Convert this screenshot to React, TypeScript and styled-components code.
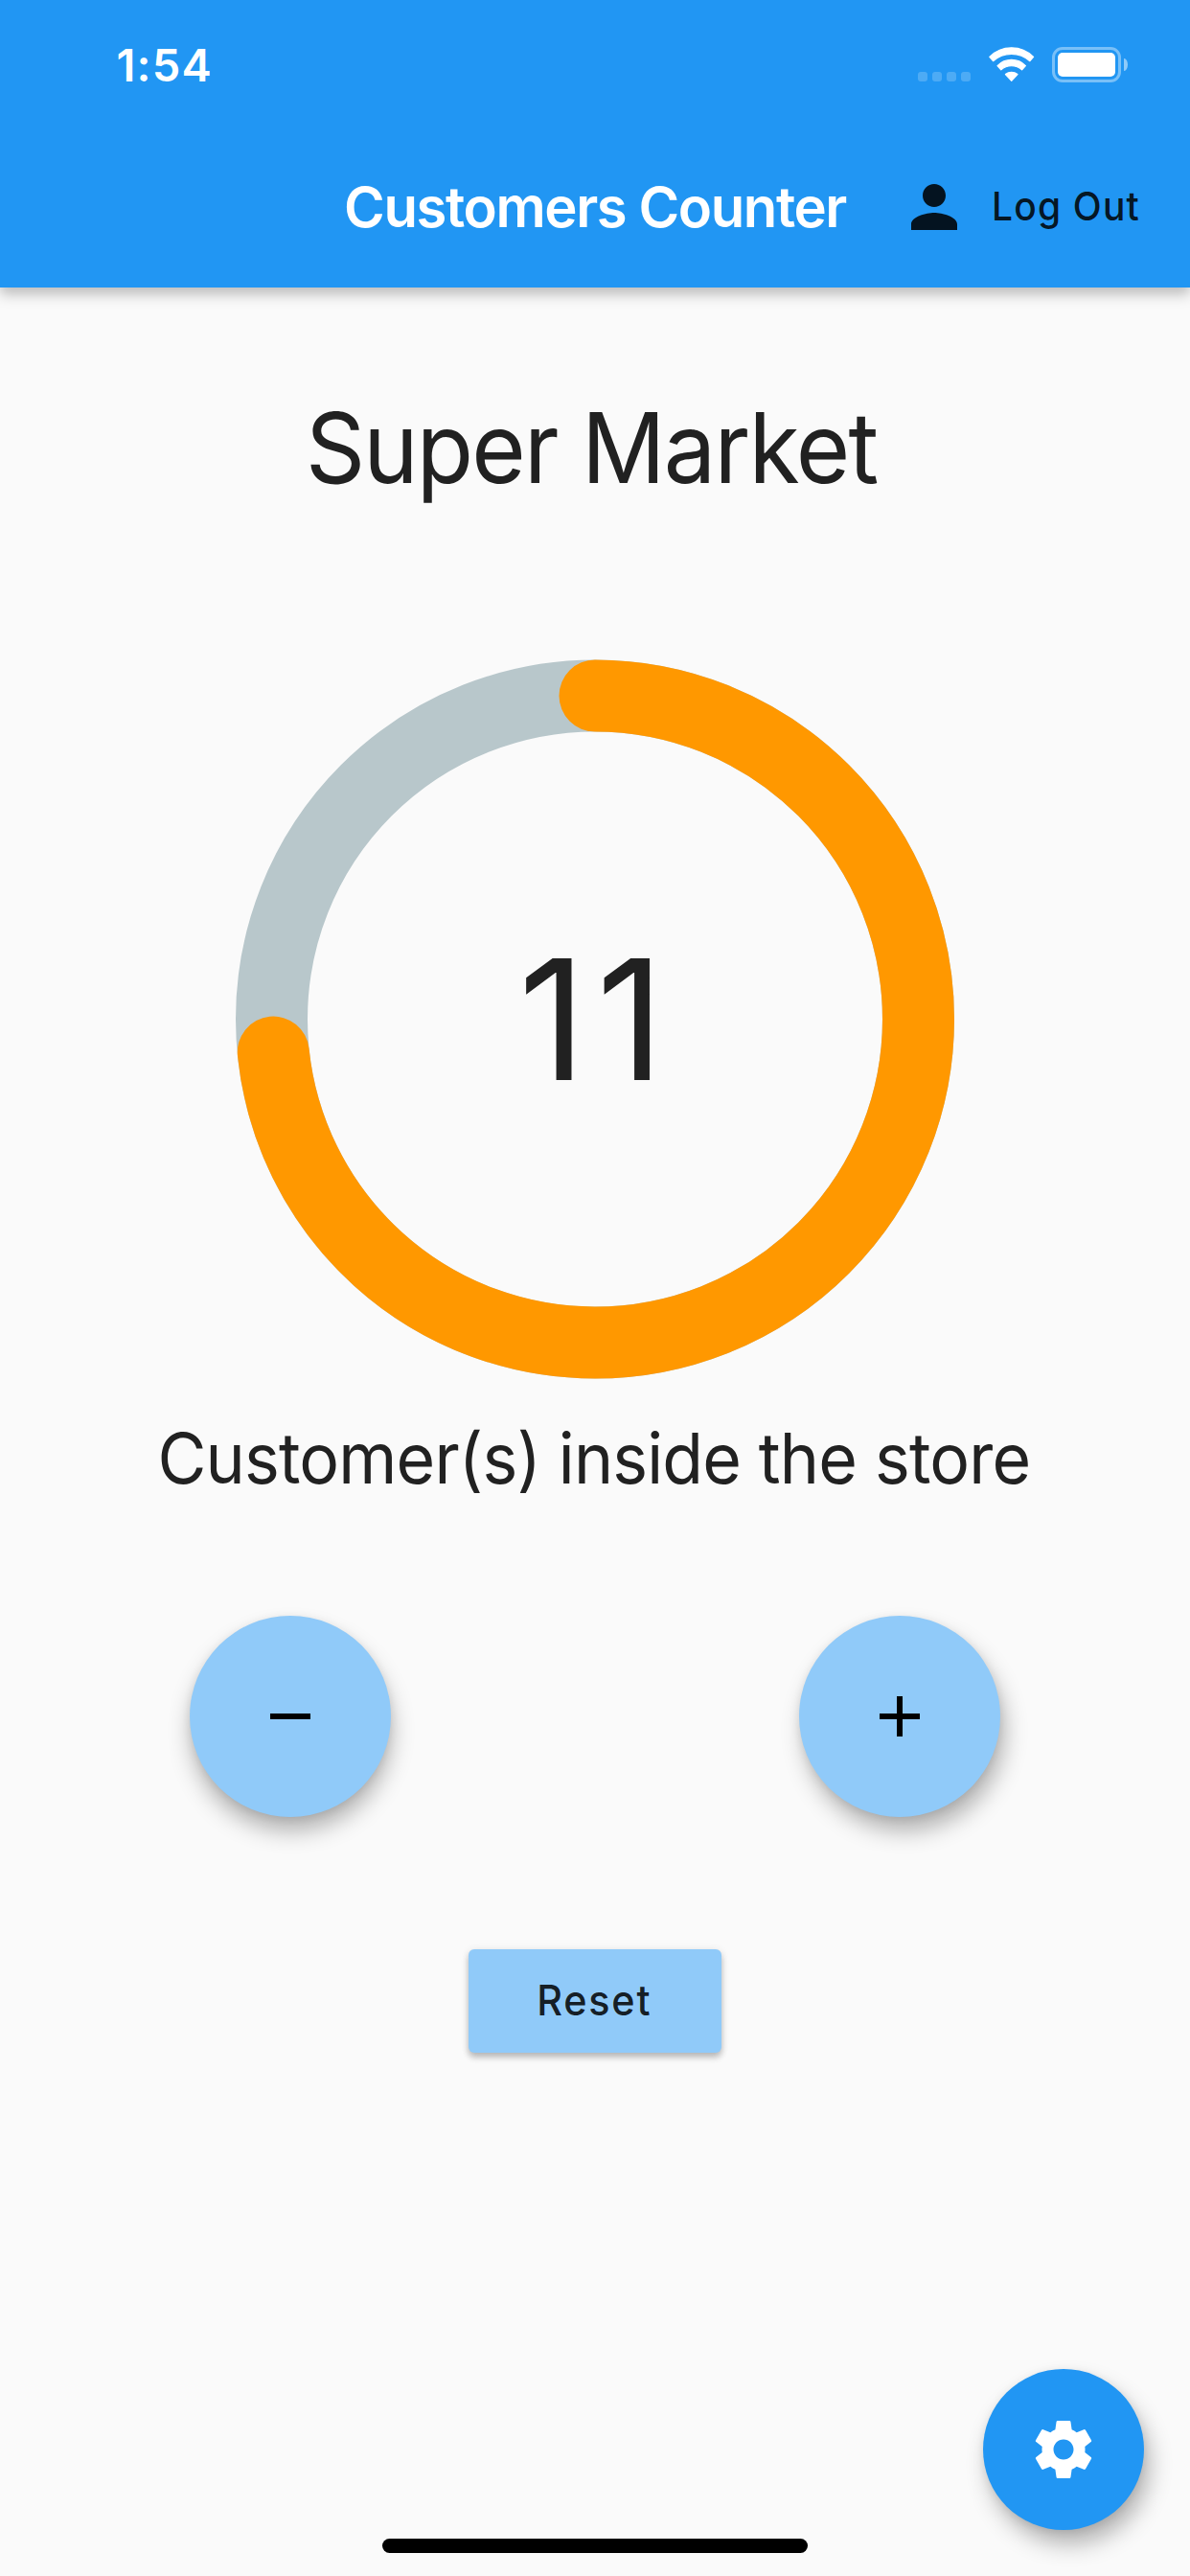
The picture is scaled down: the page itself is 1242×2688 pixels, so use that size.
import React, { useState } from "react";
import styled, { createGlobalStyle } from "styled-components";

const BLUE = "#2196f3";
const LIGHT_BLUE = "#90caf9";
const INK = "rgba(0, 0, 0, 0.87)";
const CAPACITY = 15;

const GlobalStyle = createGlobalStyle`
  * {
    box-sizing: border-box;
  }
  body {
    margin: 0;
    background: #fafafa;
  }
`;

const Screen = styled.div`
  position: relative;
  display: flex;
  flex-direction: column;
  width: 1242px;
  height: 2688px;
  overflow: hidden;
  background: #fafafa;
  color: #212121;
  font-family: Inter, "Liberation Sans", sans-serif;
`;

const Header = styled.header`
  flex: none;
  height: 300px;
  background: ${BLUE};
  box-shadow: 0 7px 13px rgba(0, 0, 0, 0.25);
`;

const StatusBar = styled.div`
  display: flex;
  justify-content: space-between;
  height: 132px;
  padding: 39px 65px 0 121.5px;
  color: #fff;
`;

const Clock = styled.span`
  font-size: 47px;
  font-weight: 600;
  line-height: 57px;
  letter-spacing: 1.2px;
`;

const StatusIcons = styled.div`
  display: flex;
  align-items: flex-start;
  padding-top: 10px;
`;

const SignalDots = styled.div`
  display: flex;
  gap: 5px;
  padding-top: 26px;
  margin-right: 18px;
`;

const SignalDot = styled.i`
  width: 10px;
  height: 10px;
  border-radius: 3px;
  background: rgba(255, 255, 255, 0.2);
`;

const WifiGlyph = styled.svg`
  display: block;
  width: 50px;
  height: 38px;
  margin: -1px 17px 0 0;
`;

const Battery = styled.div`
  display: flex;
  align-items: center;
  gap: 3px;
`;

const BatteryCase = styled.div`
  width: 72px;
  height: 37px;
  padding: 3px;
  border: 3px solid rgba(255, 255, 255, 0.4);
  border-radius: 11px;
`;

const BatteryCharge = styled.div`
  height: 25px;
  border-radius: 5px;
  background: #fff;
`;

const BatteryTip = styled.div`
  width: 4px;
  height: 13px;
  border-radius: 0 4px 4px 0 / 0 7px 7px 0;
  background: rgba(255, 255, 255, 0.5);
`;

const AppBar = styled.div`
  display: grid;
  grid-template-columns: 1fr auto 1fr;
  align-items: center;
  height: 168px;
`;

const Title = styled.h1`
  grid-column: 2;
  margin: 0;
  color: #fff;
  font-size: 58px;
  font-weight: 600;
  line-height: 70px;
  letter-spacing: -1.4px;
  white-space: nowrap;
`;

const LogOut = styled.button`
  display: flex;
  align-items: center;
  justify-content: flex-end;
  gap: 24px;
  padding: 0 44px 0 0;
  border: 0;
  background: none;
  color: ${INK};
  font: 500 41px/50px Inter, "Liberation Sans", sans-serif;
  letter-spacing: 1.26px;
  white-space: nowrap;
`;

const LogOutLabel = styled.span`
  padding-bottom: 2px;
  transform: scaleX(0.95);
  transform-origin: left;
`;

const Glyph = styled.svg`
  display: block;
  flex: none;
  width: 72px;
  height: 72px;
  fill: currentColor;
`;

const Main = styled.main`
  display: flex;
  flex-direction: column;
  align-items: center;
  padding-top: 105px;
`;

const StoreName = styled.h2`
  margin: 0;
  padding-right: 8px;
  font-size: 102px;
  font-weight: 400;
  line-height: 124px;
  letter-spacing: -1.9px;
  white-space: nowrap;
  transform: scaleX(0.95);
`;

const Gauge = styled.div`
  display: grid;
  place-items: center;
  margin-top: 159px;

  & > * {
    grid-area: 1 / 1;
  }
`;

const GaugeRing = styled.svg`
  display: block;
  width: 752px;
  height: 751px;
`;

const Count = styled.output`
  padding-left: 3px;
  font-size: 174px;
  line-height: 211px;
  letter-spacing: 10.7px;
`;

const Caption = styled.p`
  margin: 38px 0 0;
  padding-right: 2px;
  font-size: 73px;
  line-height: 89px;
  letter-spacing: -0.85px;
  white-space: nowrap;
  transform: scaleX(0.955);
`;

const Stepper = styled.div`
  display: flex;
  justify-content: space-between;
  align-self: stretch;
  margin-top: 120px;
  padding: 0 198px;
`;

const RoundButton = styled.button<{ $size: number; $fill: string; $ink: string; $shift: number }>`
  display: grid;
  place-items: center;
  width: ${(p) => p.$size}px;
  height: ${(p) => p.$size}px;
  padding: 0;
  border: 0;
  border-radius: 50%;
  background: ${(p) => p.$fill};
  color: ${(p) => p.$ink};
  box-shadow:
    ${(p) => p.$shift}px 15px 24px -1px rgba(0, 0, 0, 0.3),
    0 2px 10px rgba(0, 0, 0, 0.08);
`;

const ResetButton = styled.button`
  display: grid;
  place-items: center;
  width: 264px;
  height: 108px;
  margin-top: 138px;
  padding: 0 2px 2px 0;
  border: 0;
  border-radius: 6px;
  background: ${LIGHT_BLUE};
  box-shadow:
    0 5px 6px rgba(0, 0, 0, 0.22),
    0 1px 8px rgba(0, 0, 0, 0.1);
  color: ${INK};
  font: 500 43.5px/53px Inter, "Liberation Sans", sans-serif;
  letter-spacing: 1.9px;
`;

const ResetLabel = styled.span`
  transform: scaleX(0.95);
`;

const FloatingAction = styled.div`
  position: absolute;
  right: 48px;
  bottom: 48px;
`;

const HomeIndicator = styled.div`
  position: absolute;
  bottom: 24px;
  left: 399px;
  width: 444px;
  height: 15px;
  border-radius: 8px;
  background: #000;
`;

const ICONS = {
  person:
    "M12 12c2.21 0 4-1.79 4-4s-1.79-4-4-4-4 1.79-4 4 1.79 4 4 4zm0 2c-2.67 0-8 1.34-8 4v2h16v-2c0-2.66-5.33-4-8-4z",
  minus: "M19 13H5v-2h14v2z",
  plus: "M19 13h-6v6h-2v-6H5v-2h6V5h2v6h6v2z",
  settings:
    "M19.43 12.98c.04-.32.07-.64.07-.98s-.03-.66-.07-.98l2.11-1.65c.19-.15.24-.42.12-.64l-2-3.46c-.12-.22-.39-.3-.61-.22l-2.49 1c-.52-.4-1.08-.73-1.69-.98l-.38-2.65C14.46 2.18 14.25 2 14 2h-4c-.25 0-.46.18-.49.42l-.38 2.65c-.61.25-1.17.59-1.69.98l-2.49-1c-.23-.09-.49 0-.61.22l-2 3.46c-.13.22-.07.49.12.64l2.11 1.65c-.04.32-.07.65-.07.98s.03.66.07.98l-2.11 1.65c-.19.15-.24.42-.12.64l2 3.46c.12.22.39.3.61.22l2.49-1c.52.4 1.08.73 1.69.98l.38 2.65c.03.24.24.42.49.42h4c.25 0 .46-.18.49-.42l.38-2.65c.61-.25 1.17-.59 1.69-.98l2.49 1c.23.09.49 0 .61-.22l2-3.46c.12-.22.07-.49-.12-.64l-2.11-1.65zM12 15.5c-1.93 0-3.5-1.57-3.5-3.5s1.57-3.5 3.5-3.5 3.5 1.57 3.5 3.5-1.57 3.5-3.5 3.5z",
};

function Icon({ name }: { name: keyof typeof ICONS }) {
  return (
    <Glyph viewBox="0 0 24 24" aria-hidden="true">
      <path d={ICONS[name]} />
    </Glyph>
  );
}

function WifiIcon() {
  return (
    <WifiGlyph viewBox="-1 -1 50 38" fill="#fff" stroke="#fff" strokeWidth="1.2" strokeLinejoin="round" aria-hidden="true">
      <path d="M.8 10.4A32.2 32.2 0 0 1 46.6 10.4L42.9 14.7A28.6 28.6 0 0 0 4.5 14.7Z" />
      <path d="M9 19.7A20.4 20.4 0 0 1 38.4 19.7L34.6 23.9A16.4 16.4 0 0 0 12.8 23.9Z" />
      <path d="M17.4 28.6A10.4 10.4 0 0 1 30 28.6L23.7 35.3Z" />
    </WifiGlyph>
  );
}

function OccupancyRing({ ratio }: { ratio: number }) {
  const radius = 337.5;
  const length = 2 * Math.PI * radius;
  return (
    <GaugeRing viewBox="0 0 752 751" fill="none" strokeWidth="75" aria-hidden="true">
      <circle cx="376" cy="375.5" r={radius} stroke="#b8c7cb" />
      <circle
        cx="376"
        cy="375.5"
        r={radius}
        stroke="#ff9800"
        strokeLinecap="round"
        strokeDasharray={`${length * ratio} ${length}`}
        transform="rotate(-90 376 375.5)"
      />
    </GaugeRing>
  );
}

export default function App() {
  const [count, setCount] = useState(11);

  return (
    <>
      <GlobalStyle />
      <Screen>
        <Header>
          <StatusBar>
            <Clock>1:54</Clock>
            <StatusIcons>
              <SignalDots>
                <SignalDot />
                <SignalDot />
                <SignalDot />
                <SignalDot />
              </SignalDots>
              <WifiIcon />
              <Battery>
                <BatteryCase>
                  <BatteryCharge />
                </BatteryCase>
                <BatteryTip />
              </Battery>
            </StatusIcons>
          </StatusBar>
          <AppBar>
            <Title>Customers Counter</Title>
            <LogOut>
              <Icon name="person" />
              <LogOutLabel>Log Out</LogOutLabel>
            </LogOut>
          </AppBar>
        </Header>

        <Main>
          <StoreName>Super Market</StoreName>
          <Gauge>
            <OccupancyRing ratio={Math.min(count / CAPACITY, 1)} />
            <Count>{count}</Count>
          </Gauge>
          <Caption>Customer(s) inside the store</Caption>
          <Stepper>
            <RoundButton
              $size={210}
              $fill={LIGHT_BLUE}
              $ink="#000"
              $shift={1}
              aria-label="Remove customer"
              onClick={() => setCount((n) => Math.max(n - 1, 0))}
            >
              <Icon name="minus" />
            </RoundButton>
            <RoundButton
              $size={210}
              $fill={LIGHT_BLUE}
              $ink="#000"
              $shift={5}
              aria-label="Add customer"
              onClick={() => setCount((n) => Math.min(n + 1, CAPACITY))}
            >
              <Icon name="plus" />
            </RoundButton>
          </Stepper>
          <ResetButton onClick={() => setCount(0)}>
            <ResetLabel>Reset</ResetLabel>
          </ResetButton>
        </Main>

        <FloatingAction>
          <RoundButton $size={168} $fill={BLUE} $ink="#fff" $shift={6} aria-label="Settings">
            <Icon name="settings" />
          </RoundButton>
        </FloatingAction>
        <HomeIndicator />
      </Screen>
    </>
  );
}
